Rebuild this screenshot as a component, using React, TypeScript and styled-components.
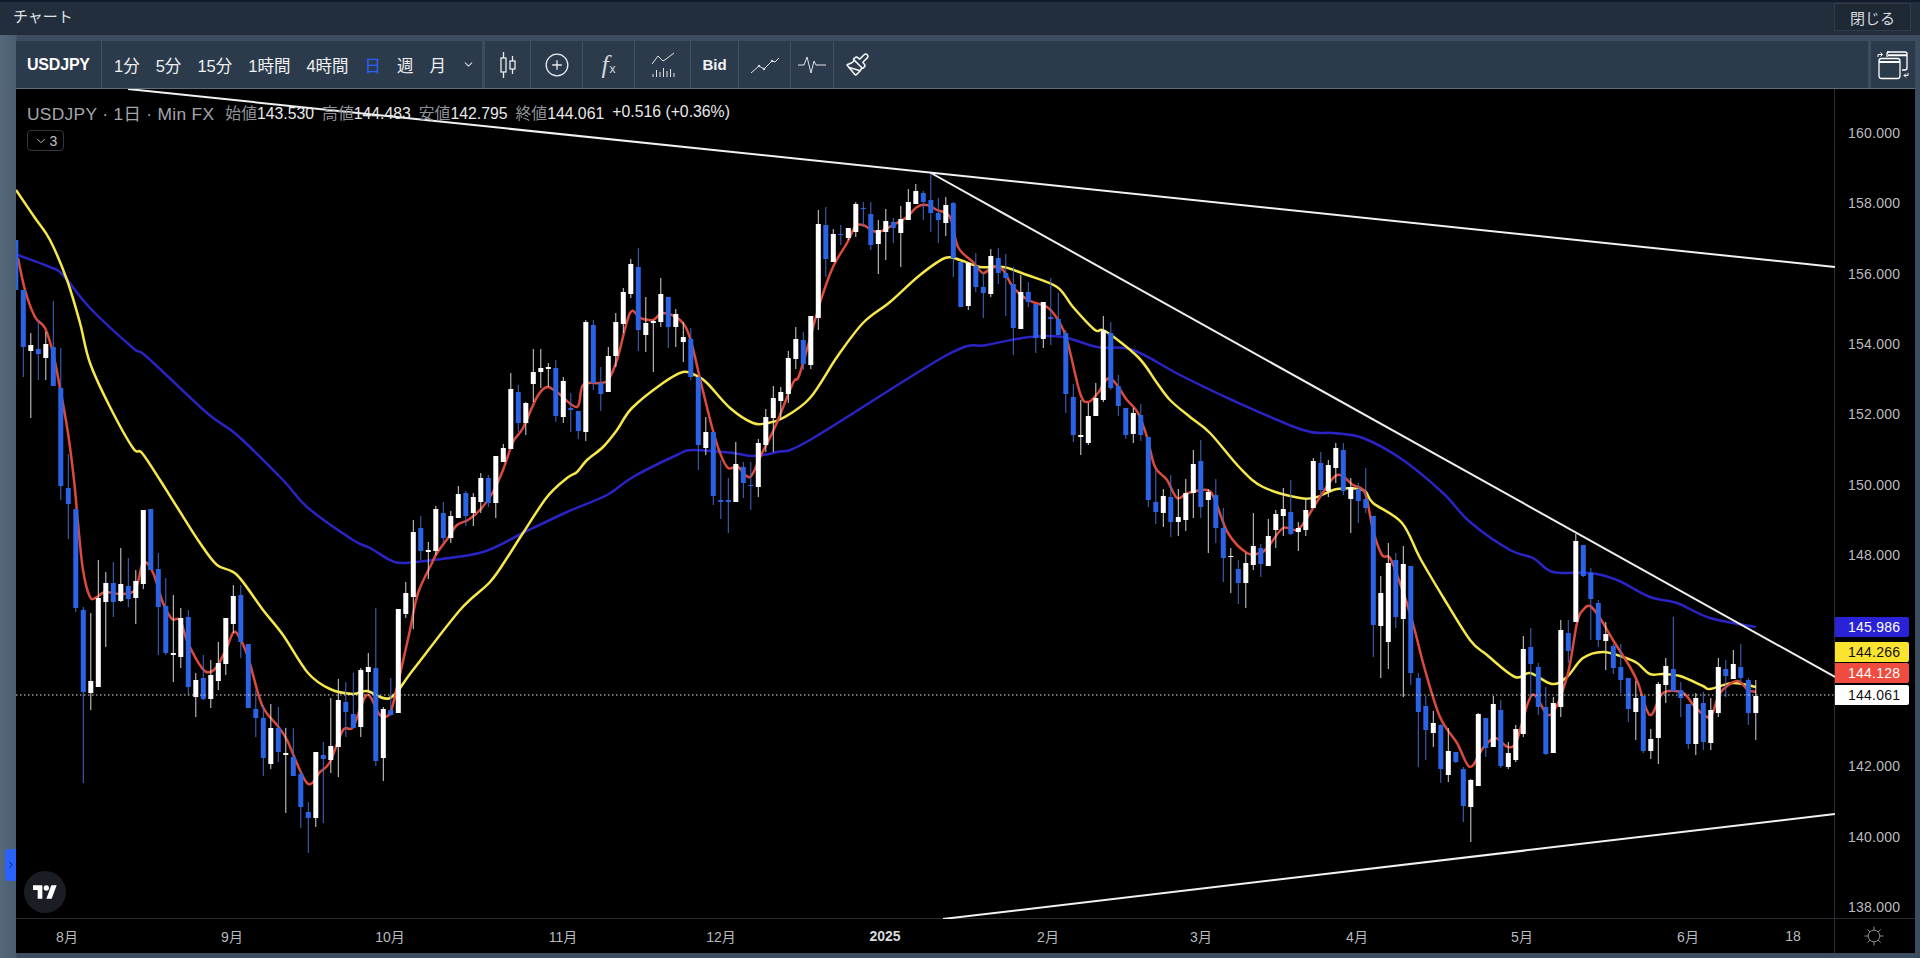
import React, {FC} from 'react';
import styled, {createGlobalStyle} from 'styled-components';
import {ChevronDown, ChevronRight, CirclePlus, Paintbrush} from 'lucide-react';

const FONT = `"Liberation Sans", "Noto Sans CJK JP", sans-serif`;

// [bodyTop, bodyBottom, wickTop, wickBottom, up] in page pixels
const CANDLES: number[][] = [
    [240,290,240,290,0],[290,347,290,377,0],[345,351,333,418,1],[349,354,320,380,0],[344,358,332,380,1],
    [347,386,301,386,0],[388,486,348,500,0],[488,504,454,539,0],[509,608,509,612,0],[610,692,607,783,0],
    [681,693,613,710,1],[598,687,560,687,1],[583,602,572,647,1],[583,602,562,617,0],[584,601,548,602,1],
    [586,599,558,607,0],[581,598,570,624,1],[510,584,510,589,1],[509,570,509,570,0],[569,607,553,655,0],
    [606,653,578,655,0],[653,655,595,682,1],[618,657,608,668,1],[617,687,610,695,0],[680,697,673,717,1],
    [678,699,655,700,0],[675,699,660,708,1],[663,681,642,690,1],[618,664,618,675,1],[596,624,585,633,1],
    [595,642,585,658,0],[644,708,644,708,0],[709,718,690,737,0],[718,758,705,776,0],[728,764,704,769,1],
    [728,752,707,762,0],[753,755,728,813,1],[757,776,728,776,0],[774,807,770,828,0],[812,818,802,853,0],
    [752,818,752,827,1],[755,759,742,823,0],[746,760,698,773,1],[700,747,679,777,1],[702,712,682,737,0],
    [714,728,673,728,0],[670,727,668,737,1],[667,672,653,693,1],[668,761,608,766,0],[709,758,707,781,1],
    [710,715,678,716,0],[609,713,609,713,1],[593,614,582,618,1],[532,597,520,629,1],[528,551,516,560,0],
    [550,552,542,579,1],[509,551,506,555,1],[513,538,502,543,0],[516,538,511,543,1],[494,518,486,518,1],
    [493,516,491,526,0],[497,513,493,526,1],[478,502,473,513,1],[478,503,475,507,0],[456,503,456,518,1],
    [448,462,444,462,1],[389,449,373,449,1],[392,423,385,432,0],[403,423,402,435,1],[372,384,349,402,1],
    [368,372,349,388,1],[367,369,363,387,1],[368,416,360,422,0],[381,417,377,423,1],[408,410,393,432,0],
    [411,431,411,439,0],[322,432,320,441,1],[325,383,320,390,0],[383,394,367,411,0],[356,392,347,392,1],
    [322,356,313,367,1],[292,324,288,333,1],[264,294,259,298,1],[267,330,248,351,0],[323,335,297,352,1],
    [321,323,320,372,1],[294,322,278,327,1],[297,327,297,348,0],[314,327,309,347,1],[337,342,322,362,1],
    [339,377,328,380,0],[377,445,377,470,0],[432,448,417,455,1],[432,496,432,505,0],[500,502,460,519,0],
    [500,502,478,533,0],[464,502,442,502,1],[467,483,462,498,0],[485,486,462,510,0],[443,487,439,497,1],
    [417,445,409,452,1],[398,418,386,452,1],[392,401,387,420,1],[358,394,351,403,1],[339,359,327,369,1],
    [340,364,332,370,0],[316,365,316,369,1],[224,318,210,330,1],[225,259,207,277,0],[234,262,229,262,1],
    [234,235,225,245,0],[228,238,228,240,1],[204,232,202,237,1],[208,209,202,227,0],[214,245,202,250,0],
    [230,244,220,274,1],[221,232,209,260,1],[222,228,218,243,0],[219,233,206,267,1],[202,220,189,220,1],
    [191,204,184,204,1],[193,202,191,220,0],[200,213,173,232,0],[213,220,198,243,0],[205,223,197,236,1],
    [203,258,202,277,0],[262,307,262,307,0],[263,306,262,310,1],[266,287,253,292,0],[287,293,272,318,0],
    [256,294,249,297,1],[258,273,248,284,0],[273,278,254,316,0],[284,328,267,355,0],[292,329,275,329,1],
    [292,302,282,307,0],[304,338,304,353,0],[302,339,302,348,1],[317,319,278,345,0],[319,335,293,335,0],
    [333,394,330,413,0],[397,435,384,442,0],[435,437,400,455,1],[416,443,403,445,1],[398,416,383,416,1],
    [330,400,316,402,1],[333,388,322,390,0],[386,406,375,416,0],[408,435,408,439,0],[413,434,408,443,1],
    [415,435,404,441,0],[437,500,437,507,0],[502,512,469,524,0],[496,513,489,527,1],[497,522,475,537,0],
    [517,522,489,536,1],[493,520,479,531,1],[464,493,450,518,1],[461,507,440,518,0],[492,500,489,553,1],
    [495,528,479,543,0],[528,558,508,582,0],[556,557,548,593,1],[569,583,560,604,0],[563,583,553,608,1],
    [546,565,513,570,1],[548,564,544,577,0],[536,566,519,566,1],[514,530,510,548,1],[509,516,488,536,1],
    [512,534,480,535,0],[528,532,522,551,1],[510,530,498,536,1],[461,508,458,508,1],[463,490,452,497,0],
    [465,491,460,497,1],[448,468,443,483,1],[450,491,443,495,0],[487,499,478,533,1],[489,501,483,523,0],
    [499,508,468,513,0],[516,625,516,657,0],[593,626,576,678,1],[563,642,543,669,1],[560,617,553,628,0],
    [564,619,546,697,1],[566,673,566,685,0],[678,712,673,767,0],[706,730,696,760,0],[723,733,711,747,1],
    [725,769,724,783,0],[751,775,728,782,1],[752,762,752,763,0],[769,806,767,822,0],[780,807,779,842,1],
    [714,786,713,786,1],[718,748,718,757,0],[704,747,696,747,1],[710,766,700,768,0],[753,767,742,769,1],
    [729,760,725,762,1],[649,734,636,737,1],[647,664,628,698,0],[667,707,663,715,0],[707,754,687,755,0],
    [703,753,697,753,1],[630,707,620,717,1],[633,651,620,663,0],[541,622,534,622,1],[545,576,545,577,0],
    [573,599,568,640,0],[603,640,600,647,0],[634,641,622,670,1],[646,668,644,674,0],[667,680,644,693,0],
    [678,709,678,722,0],[698,712,681,740,1],[696,751,696,753,0],[739,751,729,759,1],[684,738,682,764,1],
    [666,685,658,703,1],[669,691,617,692,0],[690,698,682,717,0],[704,744,704,749,0],[698,744,693,755,1],
    [703,742,692,750,0],[710,743,698,750,1],[667,713,658,717,1],[669,676,660,697,0],[664,679,650,679,1],
    [667,678,644,683,0],[680,713,678,725,0],[696,713,680,740,1],
];

const RED = '18,258 25,290 35,317 45,328 53,353 60,388 68,433 74,480 78,523 83,570 90,597 97,597 105,592 120,594 135,590 142,565 147,563 154,575 163,603 172,619 180,620 188,643 202,668 210,672 218,665 227,647 233,633 238,635 248,657 262,705 277,725 287,740 307,783 320,772 330,762 343,730 353,727 367,695 380,715 390,713 397,687 401,670 410,630 418,593 432,563 437,553 448,538 457,525 468,520 480,510 493,492 503,470 513,442 523,428 537,397 547,387 558,393 577,407 583,385 600,383 608,380 617,360 630,313 640,318 653,320 663,313 680,320 690,338 702,387 712,427 720,453 728,468 738,467 750,477 762,453 775,427 793,383 800,373 820,303 833,267 847,243 855,227 863,225 877,232 893,225 907,217 917,207 927,205 937,210 950,217 958,247 973,262 983,273 993,267 1003,270 1013,287 1028,300 1047,307 1058,320 1067,340 1080,393 1088,402 1098,393 1110,378 1127,400 1138,413 1147,437 1155,467 1167,480 1177,498 1188,493 1207,490 1215,500 1228,533 1247,553 1260,553 1268,547 1283,528 1297,530 1307,518 1320,497 1337,475 1353,485 1365,493 1373,530 1382,555 1390,558 1400,583 1412,620 1425,670 1440,717 1457,743 1470,767 1483,748 1495,738 1508,747 1517,740 1532,695 1550,715 1567,677 1577,623 1583,610 1590,606 1600,618 1613,640 1630,667 1638,683 1650,715 1663,693 1683,693 1695,707 1710,717 1720,693 1737,681 1748,690 1756,692';
const YELLOW = '16,190 35,218 50,240 67,280 80,323 90,363 110,407 133,448 142,453 160,480 177,507 200,543 217,565 237,575 263,610 283,635 308,673 330,689 353,694 367,691 390,698 413,670 460,610 490,582 507,558 523,533 547,497 567,478 577,472 587,460 603,447 617,430 632,408 663,383 683,372 695,375 707,383 730,408 753,423 767,423 783,418 810,398 837,357 863,323 890,302 920,275 945,258 960,260 980,267 1003,267 1027,275 1057,287 1073,307 1095,330 1105,331 1138,357 1157,383 1170,400 1190,417 1210,433 1240,468 1263,487 1300,498 1317,497 1337,489 1363,490 1373,503 1402,523 1420,558 1443,597 1470,640 1487,655 1515,677 1530,673 1552,684 1567,677 1583,658 1603,652 1623,657 1637,663 1650,674 1663,674 1680,676 1703,686 1710,689 1733,683 1756,687';
const BLUE = '18,255 50,267 63,275 90,308 133,348 147,357 207,413 237,435 283,480 307,507 353,540 370,548 390,560 403,563 433,560 483,552 523,533 567,512 607,495 633,477 677,455 693,450 733,453 753,456 777,452 810,440 947,355 987,345 1030,337 1063,337 1097,347 1133,350 1180,375 1232,400 1303,430 1333,433 1363,438 1403,460 1443,493 1470,522 1510,550 1533,558 1553,572 1590,573 1617,580 1650,597 1677,603 1710,618 1756,627';

const TIME_LABELS = [
    {text: '8月', x: 67}, {text: '9月', x: 232}, {text: '10月', x: 390}, {text: '11月', x: 563},
    {text: '12月', x: 721}, {text: '2025', x: 885, bold: true}, {text: '2月', x: 1048}, {text: '3月', x: 1201},
    {text: '4月', x: 1357}, {text: '5月', x: 1522}, {text: '6月', x: 1688}, {text: '18', x: 1793},
];

const TICKS = ['160.000', '158.000', '156.000', '154.000', '152.000', '150.000', '148.000', '', '', '142.000', '140.000', '138.000'];

const INTERVALS = ['1分', '5分', '15分', '1時間', '4時間', '日', '週', '月'];

const SLOT = 60;

// catmull-rom through the read off points, the averages are smooth curves
const smooth = (line: string) => {
    const pts = line.split(' ').map(p => p.split(',').map(Number));
    let d = `M${pts[0][0]} ${pts[0][1]}`;
    for (let i = 0; i < pts.length - 1; i++) {
        const p0 = pts[Math.max(i - 1, 0)];
        const p1 = pts[i];
        const p2 = pts[i + 1];
        const p3 = pts[Math.min(i + 2, pts.length - 1)];
        const c1x = p1[0] + (p2[0] - p0[0]) / 6;
        const c1y = p1[1] + (p2[1] - p0[1]) / 6;
        const c2x = p2[0] - (p3[0] - p1[0]) / 6;
        const c2y = p2[1] - (p3[1] - p1[1]) / 6;
        d += `C${c1x.toFixed(1)} ${c1y.toFixed(1)} ${c2x.toFixed(1)} ${c2y.toFixed(1)} ${p2[0]} ${p2[1]}`;
    }
    return d;
};

const App: FC = () => {
    return (
        <Page>
            <GlobalStyle/>
            <TitleBar>
                <Title>チャート</Title>
                <CloseButton>閉じる</CloseButton>
            </TitleBar>
            <Frame>
                <Toolbar>
                    <Symbol>USDJPY</Symbol>
                    <Intervals>
                        {INTERVALS.map(i => <Interval key={i} $active={i === '日'}>{i}</Interval>)}
                        <MoreChevron size={13} strokeWidth={2}/>
                    </Intervals>
                    <ToolCell $w={48} $thick>
                        <svg width="20" height="28" viewBox="0 0 20 28" fill="none" stroke="#e8ebee" strokeWidth="1.3">
                            <path d="M5.5 1v6M5.5 21v6M14.5 5v5M14.5 18v5"/>
                            <rect x="3" y="7" width="5" height="14"/>
                            <rect x="12" y="10" width="5" height="8"/>
                        </svg>
                    </ToolCell>
                    <ToolCell $w={52}><CirclePlus size={26} strokeWidth={1.2} color="#e8ebee"/></ToolCell>
                    <ToolCell $w={52}><FxIcon>f<small>x</small></FxIcon></ToolCell>
                    <ToolCell $w={56}>
                        <svg width="24" height="26" viewBox="0 0 24 26" fill="none" stroke="#dfe3e7" strokeWidth="1">
                            <path d="M1 12l6-8 5 5 3-2 8-6"/>
                            <path d="M2 25v-3M5.5 25v-7M9 25v-5M12.5 25v-9M16 25v-6M19.5 25v-8M23 25v-4"/>
                        </svg>
                    </ToolCell>
                    <ToolCell $w={48}><BidText>Bid</BidText></ToolCell>
                    <ToolCell $w={52}>
                        <svg width="30" height="20" viewBox="0 0 30 20" fill="none" stroke="#dfe3e7" strokeWidth="1">
                            <path d="M1 18l8-7 5 3 8-8 3 1 4-4"/>
                            <circle cx="9" cy="11" r=".8" fill="#dfe3e7"/>
                            <circle cx="14" cy="14" r=".8" fill="#dfe3e7"/>
                            <circle cx="22" cy="6" r=".8" fill="#dfe3e7"/>
                        </svg>
                    </ToolCell>
                    <ToolCell $w={43}>
                        <svg width="28" height="20" viewBox="0 0 28 20" fill="none" stroke="#dfe3e7" strokeWidth="1">
                            <path d="M0 10h6l3-8 4 16 3-12 2 4h10"/>
                        </svg>
                    </ToolCell>
                    <ToolCell $w={47}><Paintbrush size={25} strokeWidth={1.5} color="#f2f4f6"/></ToolCell>
                    <SwapCell>
                        <svg width="32" height="32" viewBox="0 0 32 32" fill="none" stroke="#fff" strokeWidth="1.3">
                            <path d="M10 3h18a2 2 0 0 1 2 2v14a2 2 0 0 1-2 2h-3"/>
                            <path d="M10 8V5a2 2 0 0 1 2-2"/>
                            <rect x="2" y="9.5" width="21" height="20" rx="2.5"/>
                            <path d="M2 13h21M11 6.2h19" strokeWidth="2"/>
                            <path d="M1 8V5.5h4M3.5 3.5L5.5 5.5 3.5 7.5" strokeWidth="1"/>
                            <path d="M31 24v2.5h-4M29 24.5l-2 2 2 2" strokeWidth="1"/>
                        </svg>
                    </SwapCell>
                </Toolbar>
                <ChartGrid>
                    <Plot>
                        <PlotSvg viewBox="16 89 1819 830">
                            <path d={smooth(BLUE)} fill="none" stroke="#2a24c4" strokeWidth="2.5"/>
                            <path d={smooth(YELLOW)} fill="none" stroke="#f6e84a" strokeWidth="2.5"/>
                            <path d={smooth(RED)} fill="none" stroke="#dc4a3c" strokeWidth="2.5"/>
                            {CANDLES.map(([top, bottom, wickTop, wickBottom, up], i) => {
                                const x = 15.8 + 7.5 * i;
                                const color = up ? '#ffffff' : '#2b63e6';
                                return (
                                    <g key={i}>
                                        <rect x={x - 0.5} y={wickTop} width={1} height={wickBottom - wickTop} fill={up ? '#d8d8d8' : '#4569c8'}/>
                                        <rect x={x - 2.5} y={top} width={5} height={Math.max(bottom - top, 1)} fill={color}/>
                                    </g>
                                );
                            })}
                            <line x1="16" y1="695" x2="1835" y2="695" stroke="#e6e6e6" strokeWidth="1" strokeDasharray="1.5 2.5"/>
                            <line x1="128" y1="89" x2="1835" y2="267" stroke="#f2f2f2" strokeWidth="2"/>
                            <line x1="931" y1="173" x2="1835" y2="677" stroke="#eeeeee" strokeWidth="2"/>
                            <line x1="943" y1="919" x2="1835" y2="814" stroke="#f2f2f2" strokeWidth="2"/>
                        </PlotSvg>
                        <Legend>
                            <LegendRow>
                                <LegendTitle>USDJPY · 1日 · Min FX</LegendTitle>
                                <Ohlc><span>始値</span>143.530</Ohlc>
                                <Ohlc><span>高値</span>144.483</Ohlc>
                                <Ohlc><span>安値</span>142.795</Ohlc>
                                <Ohlc><span>終値</span>144.061</Ohlc>
                                <Ohlc>+0.516 (+0.36%)</Ohlc>
                            </LegendRow>
                            <Collapse><ChevronDown size={14} strokeWidth={1.6}/>3</Collapse>
                        </Legend>
                        <Logo>
                            <svg width="24" height="14" viewBox="0 0 36 20" fill="#fff">
                                <path d="M14 20H7V7H0V0h14v20zM28 20h-8L27.5 0h8L28 20z"/>
                                <circle cx="20" cy="4" r="4"/>
                            </svg>
                        </Logo>
                        <SideTab><ChevronRight size={10} strokeWidth={2.5} color="#14306e"/></SideTab>
                    </Plot>
                    <PriceAxis>
                        {TICKS.map((t, i) => <PriceTick key={i}>{t}</PriceTick>)}
                        <PriceTag $bg="#2a22d6" $fg="#ffffff" $y={528}>145.986</PriceTag>
                        <PriceTag $bg="#fbe32f" $fg="#111111" $y={553}>144.266</PriceTag>
                        <PriceTag $bg="#ef4b3f" $fg="#ffffff" $y={574}>144.128</PriceTag>
                        <PriceTag $bg="#ffffff" $fg="#111111" $y={596}>144.061</PriceTag>
                    </PriceAxis>
                    <TimeAxis>
                        {TIME_LABELS.map((l, i) => {
                            // slots are centred on the label x, the gap is what is left to the previous slot
                            const prevEnd = i === 0 ? 16 : TIME_LABELS[i - 1].x + SLOT / 2;
                            return <TimeLabel key={l.text} $bold={l.bold} style={{marginLeft: l.x - SLOT / 2 - prevEnd}}>{l.text}</TimeLabel>;
                        })}
                    </TimeAxis>
                    <AxisCorner>
                        <svg width="20" height="20" viewBox="0 0 20 20" fill="none" stroke="#8a8d92" strokeWidth="1">
                            <circle cx="10" cy="10" r="5.8"/>
                            <path d="M10 .5v3.7M10 15.8v3.7M.5 10h3.7M15.8 10h3.7M3.3 3.3l2.6 2.6M14.1 14.1l2.6 2.6M16.7 3.3l-2.6 2.6M5.9 14.1l-2.6 2.6"/>
                        </svg>
                    </AxisCorner>
                </ChartGrid>
            </Frame>
        </Page>
    );
};

const GlobalStyle = createGlobalStyle`
  html, body {
    margin: 0;
    padding: 0;
    background: #3d4d60;
    overflow: hidden;
  }
`

const Page = styled.div`
  width: 1920px;
  height: 958px;
  display: flex;
  flex-direction: column;
  font-family: ${FONT};
  background: #3d4d60;
`

const TitleBar = styled.div`
  height: 35px;
  box-sizing: border-box;
  border-top: 2px solid #121a2b;
  padding: 0 9px 3px 13px;
  display: flex;
  justify-content: space-between;
  align-items: center;
  background: #232e3c;
`

const Title = styled.div`
  font-size: 15px;
  line-height: 20px;
  color: #dfe3e7;
`

const CloseButton = styled.button`
  width: 77px;
  height: 28px;
  padding: 0;
  font-family: ${FONT};
  font-size: 15px;
  color: #d4d9de;
  background: #1f2935;
  border: 1px solid #2f3b4a;
`

const Frame = styled.div`
  flex: 1;
  min-height: 0;
  display: flex;
  flex-direction: column;
  padding: 6px 5px 5px 16px;
  background: linear-gradient(90deg, #56697c 0, #4a5d71 16px, #3d4d60 17px);
`

const Toolbar = styled.div`
  height: 48px;
  display: flex;
  align-items: stretch;
  box-sizing: border-box;
  background: #2c3b4c;
  border-bottom: 1px solid #5d6c7c;
`

const Symbol = styled.div`
  width: 85px;
  box-sizing: border-box;
  padding-left: 11px;
  display: flex;
  align-items: center;
  font-size: 16px;
  font-weight: 700;
  color: #fff;
  letter-spacing: -0.2px;
`

const Intervals = styled.div`
  width: 381px;
  box-sizing: border-box;
  padding-left: 12px;
  display: flex;
  align-items: center;
  gap: 16px;
  border-left: 1px solid #435263;
`

const Interval = styled.div<{ $active?: boolean }>`
  flex: none;
  white-space: nowrap;
  font-size: 16.5px;
  color: ${p => p.$active ? '#2962ff' : '#eef0f2'};
`

const MoreChevron = styled(ChevronDown)`
  flex: none;
  color: #cfd4d9;
`

const ToolCell = styled.div<{ $w: number; $thick?: boolean }>`
  width: ${p => p.$w}px;
  box-sizing: border-box;
  display: flex;
  align-items: center;
  justify-content: center;
  border-left: ${p => p.$thick ? '3px solid #3d4d60' : '1px solid #435263'};
`

const FxIcon = styled.div`
  font-family: "Liberation Serif", serif;
  font-style: italic;
  font-size: 26px;
  color: #d3d7db;

  small {
    font-family: ${FONT};
    font-style: normal;
    font-size: 12px;
    margin-left: 1px;
  }
`

const BidText = styled.div`
  font-size: 15px;
  font-weight: 700;
  color: #f2f4f6;
`

const SwapCell = styled.div`
  width: 47px;
  margin-left: auto;
  display: flex;
  align-items: center;
  justify-content: center;
  border-left: 3px solid #3d4d60;
  box-sizing: border-box;
`

const ChartGrid = styled.div`
  flex: 1;
  min-height: 0;
  display: grid;
  grid-template-columns: 1819px 80px;
  grid-template-rows: 830px 34px;
  background: #000;
`

const Plot = styled.div`
  position: relative;
  overflow: visible;
  border-right: 1px solid #2a2d33;
  border-bottom: 1px solid #26292f;
`

const PlotSvg = styled.svg`
  display: block;
  width: 1819px;
  height: 830px;
`

const Legend = styled.div`
  position: absolute;
  left: 11px;
  top: 12px;
  display: flex;
  flex-direction: column;
  align-items: flex-start;
  gap: 7px;
`

const LegendRow = styled.div`
  display: flex;
  align-items: center;
  gap: 8px;
  height: 22px;
`

const LegendTitle = styled.div`
  font-size: 17.4px;
  color: #a3a6ab;
  letter-spacing: 0.3px;
  margin-right: 3px;
`

const Ohlc = styled.div`
  font-size: 15.8px;
  color: #e8e8e8;

  span {
    color: #8f9297;
  }
`

const Collapse = styled.div`
  width: 37px;
  height: 21px;
  box-sizing: border-box;
  display: flex;
  align-items: center;
  justify-content: center;
  gap: 2px;
  font-size: 14px;
  color: #c4c6c9;
  border: 1px solid #33363c;
  border-radius: 4px;
`

const Logo = styled.div`
  position: absolute;
  left: 8px;
  top: 782px;
  width: 42px;
  height: 42px;
  border-radius: 50%;
  display: flex;
  align-items: center;
  justify-content: center;
  background: #1a1d24;
`

const SideTab = styled.div`
  position: absolute;
  left: -11px;
  top: 760px;
  width: 11px;
  height: 32px;
  display: flex;
  align-items: center;
  justify-content: center;
  background: #2962ff;
  border-radius: 4px 0 0 4px;
`

const PriceAxis = styled.div`
  position: relative;
  display: flex;
  flex-direction: column;
  padding-top: 9px;
  box-sizing: border-box;
  border-bottom: 1px solid #26292f;
`

const PriceTick = styled.div`
  height: 70.36px;
  flex: none;
  line-height: 70.36px;
  padding-left: 13px;
  font-size: 14px;
  letter-spacing: 0.25px;
  color: #b9bbbe;
`

const PriceTag = styled.div<{ $bg: string; $fg: string; $y: number }>`
  position: absolute;
  left: 0;
  top: ${p => p.$y}px;
  width: 74px;
  height: 20px;
  box-sizing: border-box;
  padding-left: 13px;
  line-height: 20px;
  font-size: 14px;
  letter-spacing: 0.25px;
  background: ${p => p.$bg};
  color: ${p => p.$fg};
  border-radius: 0 2px 2px 0;
`

const TimeAxis = styled.div`
  display: flex;
  align-items: center;
  border-right: 1px solid #2a2d33;
  overflow: hidden;
`

const TimeLabel = styled.div<{ $bold?: boolean }>`
  flex: 0 0 ${SLOT}px;
  text-align: center;
  font-size: 14px;
  font-weight: ${p => p.$bold ? 700 : 400};
  color: ${p => p.$bold ? '#d8dadc' : '#b9bbbe'};
`

const AxisCorner = styled.div`
  display: flex;
  align-items: center;
  justify-content: center;
  padding-right: 2px;
`

export default App;
